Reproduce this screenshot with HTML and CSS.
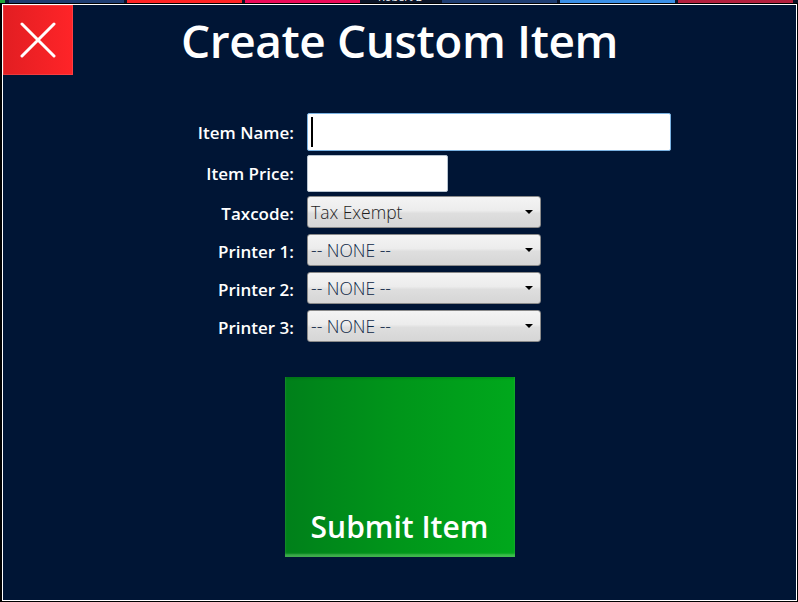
FILE: index.html
```html
<!DOCTYPE html>
<html lang="en">
<head>
    <meta charset="UTF-8">
    <meta name="viewport" content="width=device-width, initial-scale=1.0">
    <title>Create Custom Item</title>
    <link rel="stylesheet" href="styles.css">
</head>
<body>
    <div class="tab-strip">
        <span class="tab tab-green"></span>
        <span class="tab tab-gap"></span>
        <span class="tab tab-navy"></span>
        <span class="tab tab-red"></span>
        <span class="tab tab-pink"></span>
        <span class="tab tab-user"><span class="user-name">Robert B</span></span>
        <span class="tab tab-navy"></span>
        <span class="tab tab-sky"></span>
        <span class="tab tab-crimson"></span>
    </div>

    <div class="dialog">
        <div class="dialog-header">
            <button class="close-btn" type="button" aria-label="Close">
                <svg width="36" height="36" viewBox="0 0 36 36">
                    <path d="M2 2 L34 34 M34 2 L2 34" stroke="#fff" stroke-width="3" stroke-linecap="round"/>
                </svg>
            </button>
            <h1>Create Custom Item</h1>
        </div>

        <form class="item-form">
            <label class="field-label">Item Name:</label>
            <div class="text-field name-field focused"><span class="caret"></span></div>

            <label class="field-label">Item Price:</label>
            <div class="text-field price-field"></div>

            <label class="field-label">Taxcode:</label>
            <div class="dropdown"><span class="dropdown-text">Tax Exempt</span><span class="arrow"></span></div>

            <label class="field-label">Printer 1:</label>
            <div class="dropdown"><span class="dropdown-text none">-- NONE --</span><span class="arrow"></span></div>

            <label class="field-label">Printer 2:</label>
            <div class="dropdown"><span class="dropdown-text none">-- NONE --</span><span class="arrow"></span></div>

            <label class="field-label">Printer 3:</label>
            <div class="dropdown"><span class="dropdown-text none">-- NONE --</span><span class="arrow"></span></div>
        </form>

        <button class="submit-btn" type="button">Submit Item</button>
    </div>
</body>
</html>
```

FILE: styles.css
```css
html, body {
    margin: 0;
    padding: 0;
    background-color: #000;
}
body {
    font-family: "Open Sans", "Noto Sans", sans-serif;
    width: 798px;
    height: 602px;
    overflow: hidden;
}
.tab-strip {
    display: flex;
    height: 3px;
    margin-bottom: 1px;
    overflow: hidden;
    background-color: #0a1428;
}
.tab {
    display: block;
    height: 3px;
    margin-right: 3px;
}
.tab-green { width: 5px; background-color: #1fa83a; margin-right: 0; }
.tab-gap { width: 4px; background-color: #0a1a36; margin-right: 0; }
.tab-navy { width: 115px; background-color: #1e3d72; }
.tab-red { width: 115px; background-color: #ff2424; }
.tab-pink { width: 115px; background-color: #ee0a5a; }
.tab-user {
    width: 76px;
    background-color: #0a1428;
    overflow: hidden;
}
.user-name {
    display: block;
    color: #fff;
    font-size: 11px;
    line-height: 11px;
    margin-top: -9px;
    margin-left: 15px;
    white-space: nowrap;
}
.tab-sky { width: 115px; background-color: #3a8fe6; }
.tab-crimson { width: 115px; background-color: #b4203e; }

.dialog {
    margin-left: 2px;
    width: 793px;
    height: 595px;
    border: 1px solid #fff;
    background-color: #001535;
    display: flex;
    flex-direction: column;
}
.dialog-header {
    display: grid;
    grid-template-columns: 70px 1fr 70px;
    align-items: center;
    height: 70px;
}
.close-btn {
    width: 70px;
    height: 70px;
    border: none;
    padding: 0;
    background: linear-gradient(to right, #e21e22, #ff2428);
    box-shadow: inset 0 0 0 1px rgba(255, 255, 255, 0.12);
    display: flex;
    align-items: center;
    justify-content: center;
    cursor: pointer;
}
h1 {
    margin: 0;
    color: #fff;
    font-size: 46px;
    font-weight: 600;
    text-align: center;
    letter-spacing: -0.4px;
}

.item-form {
    margin-top: 38px;
    display: grid;
    grid-template-columns: 291px 1fr;
    column-gap: 13px;
    row-gap: 4px;
    align-items: start;
}
.field-label {
    color: #fff;
    font-size: 17px;
    font-weight: 600;
    text-align: right;
    align-self: center;
}
.text-field {
    background-color: #fff;
    border: 1px solid #b8c4d0;
    border-radius: 2px;
    box-sizing: border-box;
    display: flex;
    align-items: center;
}
.name-field {
    width: 364px;
    height: 38px;
}
.focused {
    border-color: #7ab2e2;
}
.caret {
    display: block;
    width: 2px;
    height: 30px;
    margin-left: 3px;
    background-color: #000;
}
.price-field {
    width: 141px;
    height: 37px;
}
.dropdown {
    width: 234px;
    height: 32px;
    margin-bottom: 2px;
    box-sizing: border-box;
    border: 1px solid #8a8a8a;
    border-radius: 3px;
    background: linear-gradient(to bottom, #f4f4f4 0%, #ececec 45%, #dedede 55%, #d6d6d6 100%);
    display: flex;
    align-items: center;
    justify-content: space-between;
    padding: 0 7px 0 3px;
}
.dropdown-text {
    font-size: 17.5px;
    font-weight: 300;
    color: #1e1e1e;
}
.dropdown-text.none {
    color: #0c2746;
}
.arrow {
    width: 0;
    height: 0;
    border-left: 4px solid transparent;
    border-right: 4px solid transparent;
    border-top: 4px solid #000;
}

.submit-btn {
    margin: 33px auto 0;
    width: 230px;
    height: 180px;
    border: none;
    padding: 0 0 10px;
    background: linear-gradient(to right, #00801a, #00961a 50%, #00a81c);
    box-shadow: inset 0 -3px 2px rgba(140, 220, 140, 0.45), inset 0 2px 2px rgba(0, 0, 0, 0.1);
    color: #fff;
    font-family: "Open Sans", "Noto Sans", sans-serif;
    font-size: 30px;
    font-weight: 600;
    display: flex;
    align-items: flex-end;
    justify-content: center;
    cursor: pointer;
}
```
